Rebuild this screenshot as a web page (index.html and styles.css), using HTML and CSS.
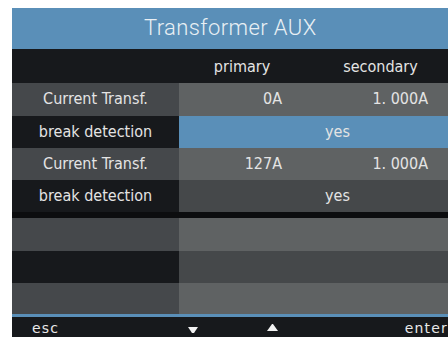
FILE: index.html
```
<!DOCTYPE html>
<html>
<head>
    <title>Transformer AUX</title>
    <link rel="stylesheet" href="styles.css">
</head>
<body>
    <div class="screen">
        <div class="title">Transformer AUX</div>
        <div class="row head">
            <div class="label"></div>
            <div class="col1">primary</div>
            <div class="col2">secondary</div>
        </div>
        <div class="row light">
            <div class="label">Current Transf.</div>
            <div class="val val1">0A</div>
            <div class="val val2">1. 000A</div>
        </div>
        <div class="row dark selected">
            <div class="label">break detection</div>
            <div class="span">yes</div>
        </div>
        <div class="row light">
            <div class="label">Current Transf.</div>
            <div class="val val1">127A</div>
            <div class="val val2">1. 000A</div>
        </div>
        <div class="row dark">
            <div class="label">break detection</div>
            <div class="span">yes</div>
        </div>
        <div class="gap"></div>
        <div class="row light tall"><div class="label"></div><div class="span"></div></div>
        <div class="row dark"><div class="label"></div><div class="span"></div></div>
        <div class="row light short"><div class="label"></div><div class="span"></div></div>
        <div class="footer">
            <span class="esc">esc</span>
            <svg class="arrow down" width="10" height="7" viewBox="0 0 10 7"><polygon points="0,0 10,0 6,6 4,6" fill="#f2f2f2"/></svg>
            <svg class="arrow up" width="11" height="8" viewBox="0 0 11 8"><polygon points="5,0 6,0 11,7 0,7" fill="#f2f2f2"/></svg>
            <span class="enter">enter</span>
        </div>
    </div>
</body>
</html>
```

FILE: styles.css
```
html, body {
    margin: 0;
    padding: 0;
    background-color: #fff;
    overflow: hidden;
}
.screen {
    margin: 8px 0 0 12px;
    background-color: #17191c;
    font-family: "DejaVu Sans Condensed", "DejaVu Sans", sans-serif;
    font-size: 16px;
    color: #e4e4e4;
}
.title {
    height: 41px;
    line-height: 40px;
    background-color: #5a8fb8;
    color: #e9eff4;
    font-family: Roboto, sans-serif;
    font-weight: 300;
    font-size: 22px;
    letter-spacing: 0.4px;
    padding-left: 132px;
    box-sizing: border-box;
}
.row {
    display: grid;
    grid-template-columns: 167px 134px 1fr;
    height: 32px;
    line-height: 32px;
}
.row.head {
    height: 34px;
    line-height: 36px;
    background-color: #17191c;
}
.row.tall {
    height: 33px;
}
.row.short {
    height: 31px;
}
.label {
    text-align: center;
}
.col1 {
    text-align: center;
    padding-right: 8px;
}
.col2 {
    text-align: center;
}
.val {
    text-align: right;
}
.val1 {
    padding-right: 31px;
}
.val2 {
    padding-right: 20px;
}
.span {
    grid-column: 2 / 4;
    text-align: center;
    padding-left: 48px;
}
.light .label {
    background-color: #45484b;
}
.light .val,
.light .span {
    background-color: #5f6263;
}
.dark .label {
    background-color: #17191c;
}
.dark .span {
    background-color: #45484a;
}
.dark.selected .span {
    background-color: #5a8fb8;
}
.row:nth-of-type(3) {
    height: 33px;
}
.gap {
    height: 6px;
    background-color: #0c0d0f;
}
.footer {
    border-top: 3px solid #5a8fb8;
    height: 20px;
    position: relative;
    font-family: "DejaVu Sans", sans-serif;
    font-size: 14px;
    letter-spacing: 1.2px;
    line-height: 20px;
    color: #e8e8e8;
}
.esc {
    position: absolute;
    left: 20px;
    top: 1px;
}
.enter {
    position: absolute;
    right: 0;
    top: 1px;
}
.arrow {
    position: absolute;
}
.arrow.down {
    left: 176px;
    top: 10px;
}
.arrow.up {
    left: 255px;
    top: 7px;
}
```
